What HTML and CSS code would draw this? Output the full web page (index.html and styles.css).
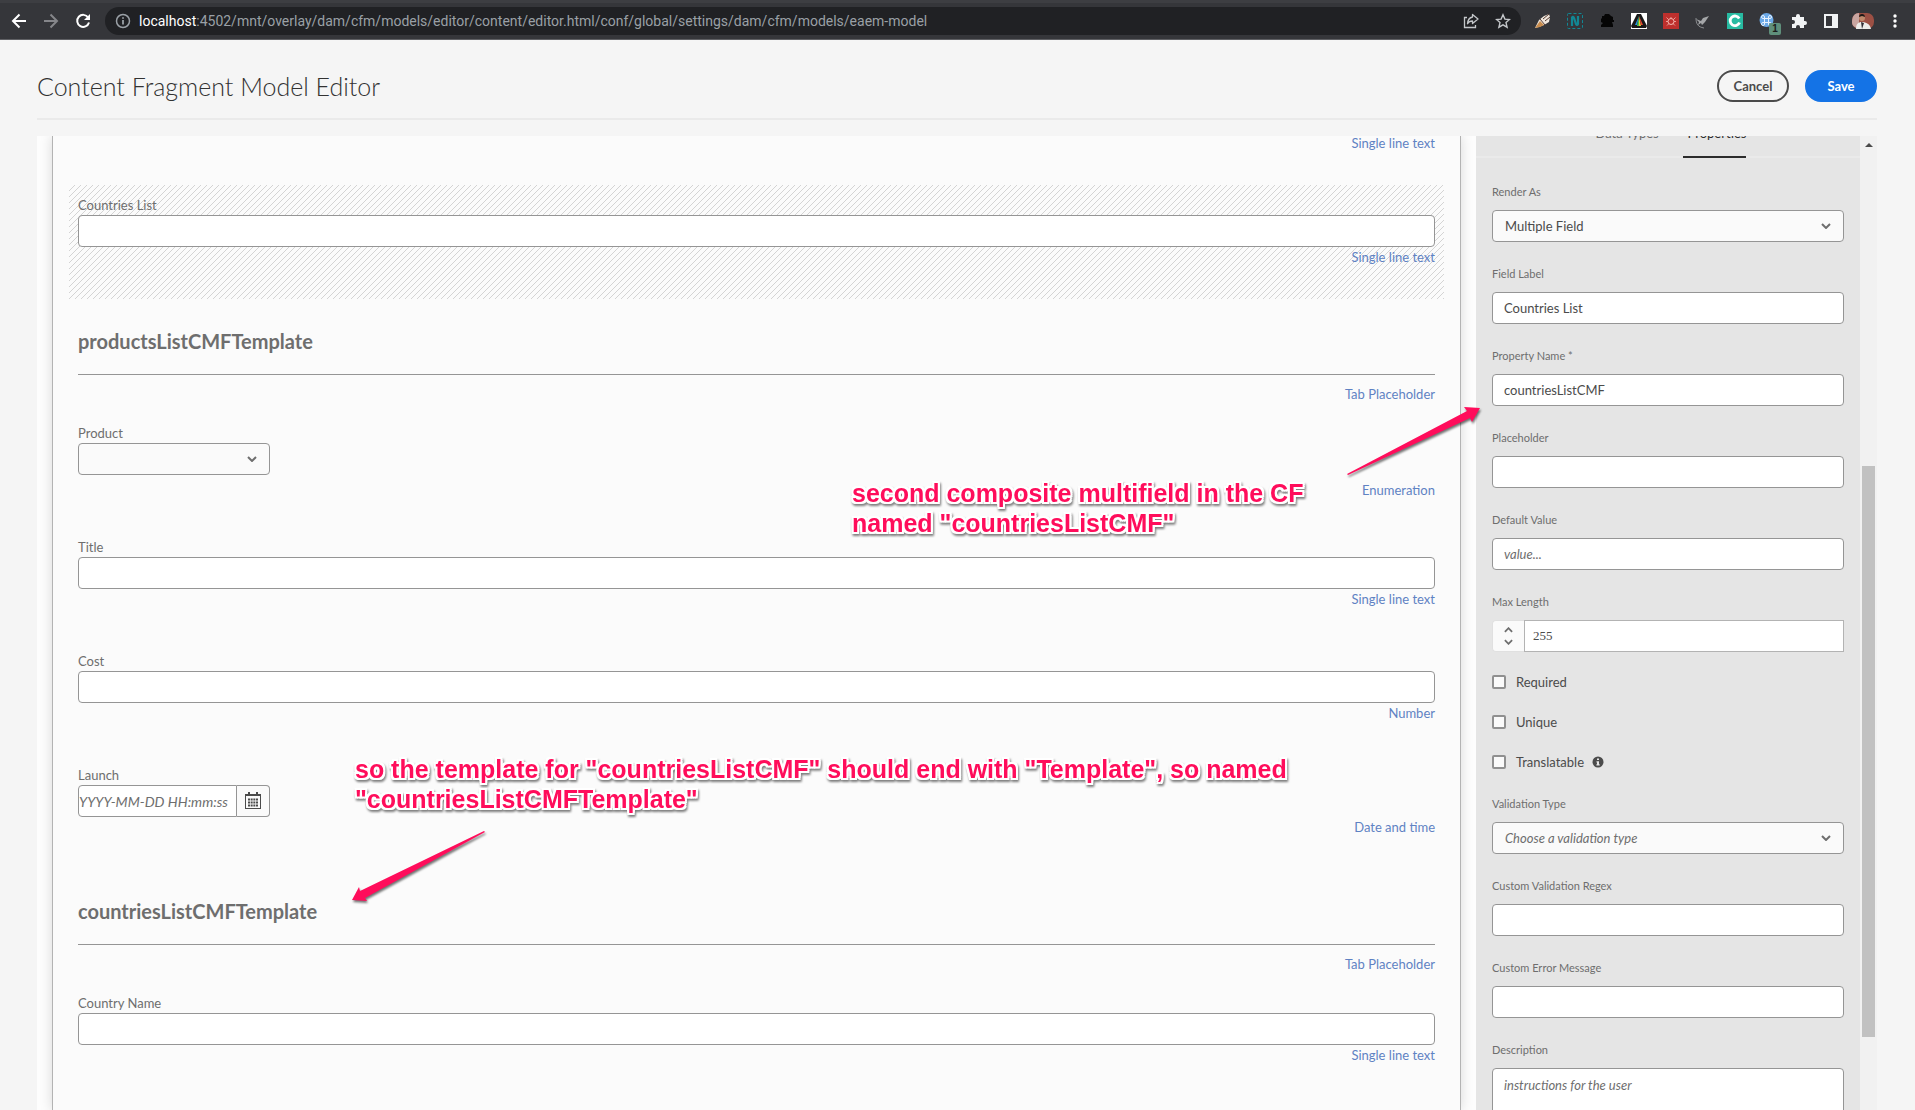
FILE: index.html
```
<!DOCTYPE html>
<html lang="en">
<head>
<meta charset="utf-8">
<title>Content Fragment Model Editor</title>
<link rel="stylesheet" href="styles.css">
</head>
<body>
<div class="browser">
  <button class="icon-btn" aria-label="Back"><svg viewBox="0 0 16 16"><path d="M15 8H2M8.500 1.500 2 8l6.500 6.500" fill="none" stroke="#fff" stroke-width="2"/></svg></button>
  <button class="icon-btn" aria-label="Forward"><svg viewBox="0 0 16 16"><path d="M1 8h13M7.500 1.500 14 8l-6.500 6.500" fill="none" stroke="#85868a" stroke-width="2"/></svg></button>
  <button class="icon-btn" aria-label="Reload"><svg viewBox="0 0 16 16"><path d="M13.200 4.500A6 6 0 1 0 14 9.500" fill="none" stroke="#fff" stroke-width="2"/><path d="M15 1v6H9z" fill="#fff"/></svg></button>
  <div class="address">
    <svg class="address-info" viewBox="0 0 16 16"><circle cx="8" cy="8" r="6.500" fill="none" stroke="#9aa0a6" stroke-width="1.500"/><path d="M8 7v4.500M8 4.200v1.600" stroke="#9aa0a6" stroke-width="1.800"/></svg>
    <span class="url"><span class="host">localhost</span>:4502/mnt/overlay/dam/cfm/models/editor/content/editor.html/conf/global/settings/dam/cfm/models/eaem-model</span>
    <button class="icon-btn" aria-label="Share"><svg viewBox="0 0 16 16"><path d="M4 4.500H1.500v10h11V12" fill="none" stroke="#c4c7ca" stroke-width="1.300"/><path d="M9.500 1.500 15 6l-5.500 4.500V8C7 8 5.500 9 4.500 10.800 4.800 7 6.500 4.600 9.500 4z" fill="none" stroke="#c4c7ca" stroke-width="1.300" stroke-linejoin="round"/></svg></button>
    <button class="icon-btn" aria-label="Bookmark"><svg viewBox="0 0 16 16"><path d="m8 1.800 1.900 4.300 4.600.4-3.500 3.100 1.100 4.600L8 11.800l-4.100 2.400L5 9.600 1.500 6.500l4.600-.4z" fill="none" stroke="#c4c7ca" stroke-width="1.400"/></svg></button>
  </div>
  <div class="extensions">
    <button class="icon-btn" aria-label="Brush extension"><svg viewBox="0 0 16 16"><path d="M0 15 4 7l5-4 5-2 1 3-1 5-5 3-5 2z" fill="#efe6dc"/><path d="M0 15 5 8l4 4-4 2z" fill="#c98d4e"/><path d="m5 6 5 6M8 6l6-5M10 8l5-4" stroke="#54392f"/></svg></button>
    <button class="icon-btn" aria-label="N extension"><svg viewBox="0 0 16 16"><rect x=".5" y=".5" width="15" height="15" rx="1" fill="none" stroke="#118794" stroke-dasharray="3 2"/><path d="M5 13V4.500Q6 3 7 5l2 6q1 2 2 0V3" fill="none" stroke="#118794" stroke-width="2.200"/></svg></button>
    <button class="icon-btn" aria-label="Incognito extension"><svg viewBox="0 0 16 16"><path d="M3 5V3h2l1-2h4l2 2 2 1v3h1v2h-2l1 3v2H2v-2l2-2-2-1V6z" fill="#050505"/></svg></button>
    <button class="icon-btn" aria-label="Spectrum extension"><svg viewBox="0 0 16 16"><path d="M0 0h16v16H0z" fill="#fff"/><path d="M6 1h4l6 12-1 2H1l-1-2z" fill="#181818"/><path d="m8 3-4 9h2z" fill="#2a8ee0"/><path d="M8 3 6 13h2z" fill="#47bd4c"/><path d="M8 3v10h2z" fill="#f3c62f"/><path d="m8 3 2 9h2z" fill="#e84631"/></svg></button>
    <button class="icon-btn" aria-label="Red extension"><svg viewBox="0 0 16 16"><path d="M0 0h16v16H0z" fill="#bd302d"/><circle cx="8" cy="8.500" r="3" fill="none" stroke="#f4b7ae"/><path d="M8 4v1.500M3.500 4.500l2 2M12.500 4.500l-2 2M3 8.500h2M11 8.500h2M4 12.500l2-2M12 12.500l-2-2" stroke="#f4b7ae" stroke-width=".8"/></svg></button>
    <button class="icon-btn" aria-label="Rocket extension"><svg viewBox="0 0 16 16"><path d="M14 3 8 5 6 8 1 6l3 3-1 3 3-2 1 2 3-3z" fill="#a4a6a8"/><path d="M1 5c0 6 2 9 8 10" fill="none" stroke="#8c8e91"/></svg></button>
    <button class="icon-btn" aria-label="C extension"><svg viewBox="0 0 16 16"><path d="M0 0h16v16H0z" fill="#28bba2"/><path d="M12.200 5.500A4.800 4.800 0 1 0 12.500 9.500" fill="none" stroke="#fff" stroke-width="2.800"/></svg></button>
    <button class="icon-btn badge-host" aria-label="Command extension, 1 item"><svg viewBox="0 0 16 16"><circle cx="7.500" cy="7" r="7" fill="#6ba9e8"/><path d="M5.500 5.500h4v4h-4zM5.500 5.500H4A1.500 1.500 0 1 1 5.500 4zM9.500 5.500V4A1.500 1.500 0 1 1 11 5.500zM5.500 9.500V11A1.500 1.500 0 1 1 4 9.500zM9.500 9.500H11A1.500 1.500 0 1 1 9.500 11z" fill="none" stroke="#e8f3ff"/></svg><span class="badge">1</span></button>
    <button class="icon-btn" aria-label="Extensions"><svg viewBox="0 0 16 16"><path d="M1 4h4V3a2 2 0 0 1 4 0v1h4v4h1a2 2 0 0 1 0 4h-1v3H9v-1a2 2 0 0 0-4 0v1H1v-4h1a2 2 0 0 0 0-4H1z" fill="#f1f3f4"/></svg></button>
    <button class="icon-btn" aria-label="Side panel"><svg viewBox="0 0 16 16"><path d="M1 1h14v14H1zM3 3v10h6V3z" fill="#f1f3f4" fill-rule="evenodd"/></svg></button>
    <button class="icon-btn avatar" aria-label="Profile"><svg viewBox="0 0 22 16"><rect width="22" height="16" rx="7" fill="#9c5044"/><path d="M0 9C0 3 3 0 7 0v15C3 15 0 13 0 9z" fill="#c9a5a0"/><path d="M4 16c0-5 2-7 6-7s8 2 9 7z" fill="#ececea"/><circle cx="10" cy="5" r="3" fill="#c08a6c"/><path d="M7 4c0-4 6-4 6 0l-3-1z" fill="#1e1816"/><path d="m9 9 1 7 2-6z" fill="#302d33"/></svg></button>
    <button class="icon-btn" aria-label="Menu"><svg viewBox="0 0 16 16" fill="#fff"><circle cx="8" cy="3" r="1.700"/><circle cx="8" cy="8" r="1.700"/><circle cx="8" cy="13" r="1.700"/></svg></button>
  </div>
</div>

<header class="header">
  <h1>Content Fragment Model Editor</h1>
  <button class="btn">Cancel</button>
  <button class="btn btn-primary">Save</button>
</header>

<main class="workspace">
  <section class="canvas" aria-label="Model preview">
    <div class="field field-previous"><span class="type">Single line text</span></div>
    <div class="field selected">
      <label for="countries">Countries List</label>
      <input class="box" id="countries" type="text">
      <span class="type">Single line text</span>
    </div>
    <div class="field tab-field">
      <h2>productsListCMFTemplate</h2>
      <span class="type">Tab Placeholder</span>
    </div>
    <div class="field">
      <label for="product">Product</label>
      <div class="select short">
        <select class="box" id="product"><option></option></select>
        <svg class="chevron" viewBox="0 0 10 6"><path d="m1 1 4 4 4-4" /></svg>
      </div>
      <span class="type type-low">Enumeration</span>
    </div>
    <div class="field">
      <label for="title">Title</label>
      <input class="box" id="title" type="text">
      <span class="type">Single line text</span>
    </div>
    <div class="field">
      <label for="cost">Cost</label>
      <input class="box" id="cost" type="text">
      <span class="type">Number</span>
    </div>
    <div class="field">
      <label for="launch">Launch</label>
      <div class="date short">
        <input class="box" id="launch" type="text" placeholder="YYYY-MM-DD HH:mm:ss">
        <button aria-label="Pick a date"><svg viewBox="0 0 18 18"><path d="M1 2h16v15H1zM2 4v12h14V4z" fill="#4b4b4b" fill-rule="evenodd"/><path d="M5 0v4M13 0v4" stroke="#4b4b4b" stroke-width="2"/><path d="M4 7.500h10M4 10.500h10M4 13.500h10" stroke="#4b4b4b" stroke-width="2" stroke-dasharray="2 .67"/></svg></button>
      </div>
      <span class="type">Date and time</span>
    </div>
    <div class="field tab-field">
      <h2>countriesListCMFTemplate</h2>
      <span class="type">Tab Placeholder</span>
    </div>
    <div class="field">
      <label for="country">Country Name</label>
      <input class="box" id="country" type="text">
      <span class="type">Single line text</span>
    </div>
  </section>

  <aside class="rail">
    <nav class="tabs"><a href="#types">Data Types</a><a href="#properties" class="active">Properties</a></nav>
    <form class="props" id="properties">
      <div class="prop">
        <label for="render">Render As</label>
        <div class="select">
          <select class="box" id="render"><option>Multiple Field</option></select>
          <svg class="chevron" viewBox="0 0 10 6"><path d="m1 1 4 4 4-4" /></svg>
        </div>
      </div>
      <div class="prop"><label for="flabel">Field Label</label><input class="box" id="flabel" type="text" value="Countries List"></div>
      <div class="prop"><label for="pname">Property Name *</label><input class="box" id="pname" type="text" value="countriesListCMF"></div>
      <div class="prop"><label for="ph">Placeholder</label><input class="box" id="ph" type="text"></div>
      <div class="prop"><label for="def">Default Value</label><input class="box" id="def" type="text" placeholder="value..."></div>
      <div class="prop">
        <label for="max">Max Length</label>
        <div class="number">
          <div class="steps">
            <button type="button" aria-label="Increase"><svg class="chevron" viewBox="0 0 10 6"><path d="m1 5 4-4 4 4"/></svg></button>
            <button type="button" aria-label="Decrease"><svg class="chevron" viewBox="0 0 10 6"><path d="m1 1 4 4 4-4"/></svg></button>
          </div>
          <input id="max" type="text" inputmode="numeric" value="255">
        </div>
      </div>
      <div class="checks">
        <label><input type="checkbox">Required</label>
        <label><input type="checkbox">Unique</label>
        <label><input type="checkbox">Translatable<svg class="info" viewBox="0 0 12 12"><circle cx="6" cy="6" r="5.500" fill="#4b4b4b"/><path d="M5 2.500h2v1.600H5zM4.500 5.200H7v3h.7v1.200H4.400V8.200H5V6.400h-.5z" fill="#e5e5e5"/></svg></label>
      </div>
      <div class="prop">
        <label for="vtype">Validation Type</label>
        <div class="select">
          <select class="box unset" id="vtype"><option>Choose a validation type</option></select>
          <svg class="chevron" viewBox="0 0 10 6"><path d="m1 1 4 4 4-4" /></svg>
        </div>
      </div>
      <div class="prop"><label for="regex">Custom Validation Regex</label><input class="box" id="regex" type="text"></div>
      <div class="prop"><label for="err">Custom Error Message</label><input class="box" id="err" type="text"></div>
      <div class="prop"><label for="desc">Description</label><textarea class="box" id="desc" placeholder="instructions for the user"></textarea></div>
    </form>
  </aside>
  <div class="scrollbar">
    <svg class="scroll-up" viewBox="0 0 8 4"><path d="m4 0 4 4H0z" fill="#4b4b4b"/></svg>
    <div class="thumb"></div>
  </div>
</main>

<p class="note note-property">second composite multifield in the CF<br>named "countriesListCMF"</p>
<svg class="arrow arrow-property" viewBox="0 0 140 76"><path d="M3 70 123 7l-3-4 16 1-8 14-2-4L4 71z"/></svg>
<p class="note note-template">so the template for "countriesListCMF" should end with "Template", so named<br>"countriesListCMFTemplate"</p>
<svg class="arrow arrow-template" viewBox="0 0 140 80"><path d="M134 4 10 64l-1-4-7 13 15 1-2-3L135 5z"/></svg>
</body>
</html>
```
FILE: styles.css
```
* { box-sizing: border-box; }

body {
  margin: 0;
  height: 100vh;
  display: flex;
  flex-direction: column;
  overflow: hidden;
  background: #f5f5f5;
  color: #4b4b4b;
  font: 13px/20px Lato, "Liberation Sans", sans-serif;
}

button, input, select, textarea { font: inherit; color: inherit; margin: 0; }
button { padding: 0; border: 0; background: none; }
h1, h2, p { margin: 0; }
svg { display: block; }

/* Browser toolbar */
.browser {
  flex: none;
  display: flex;
  align-items: center;
  gap: 16px;
  height: 40px;
  padding: 0 12px 0 11px;
  background: #35363a;
  border-top: 3px solid #3d3e42;
  border-bottom: 1px solid #5f6064;
}
.icon-btn { flex: none; width: 16px; height: 16px; }
.icon-btn svg { width: 100%; height: 100%; }
.address {
  flex: 1;
  min-width: 0;
  display: flex;
  align-items: center;
  gap: 16px;
  height: 28px;
  margin-right: -2px;
  margin-left: -2px;
  padding: 0 10px;
  border-radius: 14px;
  background: #202124;
}
.address-info { flex: none; width: 16px; height: 16px; }
.url {
  flex: 1;
  min-width: 0;
  margin-left: -8px;
  overflow: hidden;
  white-space: nowrap;
  font-family: Roboto, "Noto Sans", sans-serif;
  font-size: 14px;
  color: #9aa0a6;
}
.host { color: #fff; }
.extensions { display: flex; gap: 16px; }
.avatar { width: 22px; margin: 0 -3px; }
.badge-host { position: relative; }
.badge {
  position: absolute;
  left: 10px;
  top: 10px;
  width: 12px;
  border-radius: 2px;
  background: #5f8f7b;
  color: #1b1b1b;
  font: 700 10px/12px "Liberation Sans", sans-serif;
}

/* Page header */
.header {
  flex: none;
  display: flex;
  align-items: center;
  gap: 16px;
  height: 80px;
  margin: 0 38px 16px 37px;
  padding-top: 14px;
  border-bottom: 2px solid #eaeaea;
}
h1 {
  flex: 1;
  font-size: 25px;
  line-height: 32px;
  font-weight: 300;
  color: #323232;
}
.btn {
  width: 72px;
  height: 32px;
  border: 2px solid #4b4b4b;
  border-radius: 16px;
  font-weight: 700;
}
.btn-primary { border-color: #1473e6; background: #1473e6; color: #fff; }

/* Workspace */
.workspace {
  flex: 1;
  min-height: 0;
  display: flex;
  margin: 0 38px 0 37px;
  overflow: hidden;
  background: #fdfdfd;
}
.canvas {
  flex: 1;
  margin: 0 15px;
  padding: 0 16px;
  border: solid #b3b3b3;
  border-width: 0 1px;
  background: #fbfbfb;
  box-shadow: 0 0 12px rgba(0, 0, 0, .15);
}
.field {
  display: flex;
  flex-direction: column;
  height: 114px;
  padding: 10px 9px 0;
  color: #6e6e6e;
}
.field-previous { height: 49px; padding-top: 0; }
.field-previous .type { line-height: 14px; }
.selected {
  background: linear-gradient(135deg, #d4d4d4 5%, transparent 5% 45%, #d4d4d4 45% 55%, transparent 55% 95%, #d4d4d4 95%) 0 0 / 6px 6px;
}
.type { align-self: flex-end; color: #5f82c3; }
.type-low { margin-top: 5px; }
.tab-field { padding-top: 30px; }
h2 {
  height: 46px;
  margin-bottom: 9px;
  border-bottom: 1px solid #959595;
  font-size: 20px;
  line-height: 24px;
  font-weight: 700;
}

.box {
  width: 100%;
  height: 32px;
  padding: 0 11px;
  border: 1px solid #959595;
  border-radius: 4px;
  background: #fff;
}
::placeholder { color: #6e6e6e; font-style: italic; opacity: 1; }
.select { display: grid; grid-template-columns: 1fr; align-items: center; }
.select > * { grid-area: 1 / 1; }
select.box { appearance: none; padding-left: 12px; background: #fafafa; }
.unset { font-style: italic; color: #6e6e6e; }
.chevron {
  width: 10px;
  height: 6px;
  fill: none;
  stroke: #6e6e6e;
  stroke-width: 2;
}
.select .chevron { justify-self: end; margin-right: 13px; pointer-events: none; }
.short { width: 192px; }
.date { display: flex; }
.date .box { flex: 1; min-width: 0; padding: 0; border-radius: 4px 0 0 4px; font-size: 14px; }
.date button {
  display: grid;
  place-items: center;
  width: 33px;
  border: 1px solid #959595;
  border-left: 0;
  border-radius: 0 4px 4px 0;
  background: #fafafa;
}
.date svg { width: 18px; height: 18px; }

/* Properties rail */
.rail { flex: none; width: 384px; background: #e5e5e5; }
.tabs {
  display: flex;
  justify-content: center;
  gap: 29px;
  height: 48px;
  margin-top: -26px;
  border-bottom: 2px solid #eaeaea;
}
.tabs a {
  width: 63px;
  height: 48px;
  padding-left: 5px;
  line-height: 46px;
  white-space: nowrap;
  color: #6e6e6e;
  text-decoration: none;
}
.tabs .active { border-bottom: 2px solid #2c2c2c; color: #2c2c2c; }
.props { padding: 26px 16px 0; }
.prop { display: flex; flex-direction: column; gap: 10px; margin-bottom: 24px; }
.prop > label { font-size: 11px; line-height: 16px; color: #6e6e6e; }
textarea.box { height: 100px; padding-top: 6px; resize: none; }
.number { display: flex; height: 32px; }
.steps {
  display: flex;
  flex-direction: column;
  justify-content: center;
  gap: 6px;
  width: 32px;
  border: 1px solid #e0e0e0;
  border-right: 0;
  border-radius: 4px 0 0 4px;
  background: #fafafa;
}
.steps button { display: grid; place-items: center; }
.steps .chevron { width: 9px; }
.number input {
  flex: 1;
  min-width: 0;
  padding: 0 8px;
  border: 1px solid #b3b3b3;
  background: #fff;
  font-family: "Liberation Serif", serif;
}
.checks { margin: -14px 0 14px; }
.checks label { display: flex; align-items: center; gap: 10px; height: 40px; }
.checks input {
  appearance: none;
  width: 14px;
  height: 14px;
  border: 2px solid #909090;
  border-radius: 2px;
  background: #fafafa;
}
.info { width: 12px; height: 12px; margin-left: -2px; }

.scrollbar { flex: none; width: 17px; padding: 7px 2px 0; background: #f1f1f1; }
.scroll-up { width: 8px; height: 4px; margin: 0 auto; }
.thumb { height: 59%; margin-top: 319px; background: #c1c1c1; }

/* Callouts drawn over the page */
.note {
  position: absolute;
  font: 700 25px/30px "Liberation Sans", Arial, sans-serif;
  white-space: nowrap;
  color: #ff0d5b;
  text-shadow: 2px 0 #fff, -2px 0 #fff, 0 2px #fff, 0 -2px #fff, 2px 2px #fff, -2px 2px #fff, 2px -2px #fff, -2px -2px #fff;
  filter: drop-shadow(1px 2px 1px rgba(0, 0, 0, .5));
}
.note-property { left: 852px; top: 478px; }
.note-template { left: 355px; top: 754px; }
.arrow {
  position: absolute;
  width: 140px;
  fill: #ff0d5b;
  filter: drop-shadow(1px 2px 1px rgba(0, 0, 0, .55));
}
.arrow-property { left: 1344px; top: 404px; height: 76px; }
.arrow-template { left: 350px; top: 827px; height: 80px; }
```
